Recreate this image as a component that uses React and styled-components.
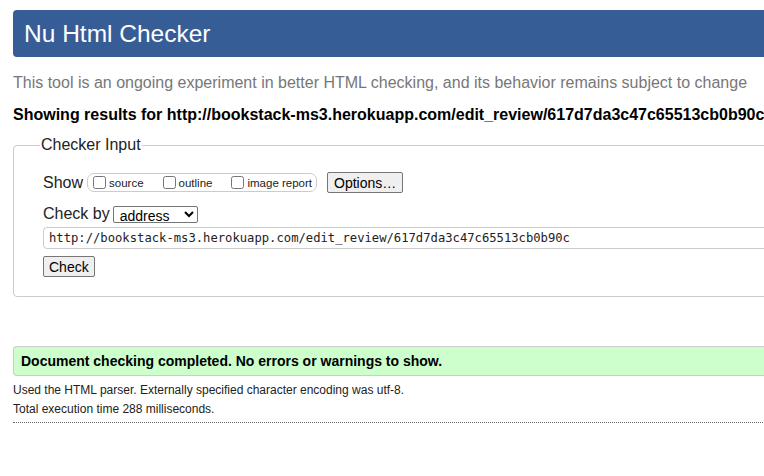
import React from 'react';
import styled, { createGlobalStyle } from 'styled-components';

const GlobalStyle = createGlobalStyle`
  html, body {
    margin: 0;
    padding: 0;
    background: #fff;
    overflow: hidden;
  }
  body {
    font-family: "Liberation Sans", Arial, sans-serif;
    color: #000;
  }
`;

const Page = styled.div`
  width: 1100px;
  padding: 10px 0 0 13px;
`;

const Header = styled.h1`
  margin: 0;
  height: 47px;
  background: #365d95;
  border-radius: 4px;
  color: #fff;
  font-weight: normal;
  font-size: 24.5px;
  line-height: 47px;
  padding-left: 11px;
`;

const Intro = styled.p`
  margin: 17px 0 0;
  color: #777;
  font-size: 16px;
  line-height: 18px;
`;

const Results = styled.p`
  margin: 14px 0 0;
  font-weight: bold;
  font-size: 16px;
  line-height: 18px;
`;

const Fieldset = styled.fieldset`
  margin: 12px 0 0;
  border: 1px solid #ccc;
  border-radius: 4px;
  padding: 8px 29px 19px;
  min-height: 0;
`;

const Legend = styled.legend`
  font-size: 16px;
  color: #222;
  padding: 0 1px;
  margin-left: -3px;
`;

const Row = styled.div`
  display: flex;
  align-items: center;
  margin-top: ${p => p.$top || 0}px;
  font-size: 16px;
`;

const Label = styled.span`
  font-size: 16px;
  color: #222;
`;

const ToggleGroup = styled.span`
  display: inline-flex;
  align-items: center;
  height: 17px;
  border: 1px solid #ccc;
  border-radius: 7px;
  padding: 0 4px 0 2px;
  margin-left: 4px;
  gap: 16px;
`;

const Toggle = styled.label`
  display: inline-flex;
  align-items: center;
  font-size: 11.5px;
  color: #222;

  input {
    margin: 0 3px 0 3px;
    width: 13px;
    height: 13px;
  }
`;

const Button = styled.button`
  font-family: "Liberation Sans", Arial, sans-serif;
  font-size: ${p => p.$size || 14}px;
  height: 21px;
  padding: 0 ${p => p.$pad || 6}px;
  background: #efefef;
  border: 1px solid #767676;
  border-radius: 2px;
  color: #000;
  margin-left: ${p => p.$left || 0}px;
`;

const Select = styled.select`
  font-family: "Liberation Sans", Arial, sans-serif;
  font-size: 14px;
  width: 85px;
  height: 17px;
  padding: 0 0 0 2px;
  border: 1px solid #767676;
  border-radius: 2px;
  margin-left: 3px;
  background: #fff;
`;

const UrlInput = styled.input`
  display: block;
  box-sizing: border-box;
  width: 1000px;
  height: 22px;
  margin-top: 4px;
  border: 1px solid #ccc;
  border-radius: 4px;
  padding: 0 5px;
  font-family: "DejaVu Sans Mono", "Liberation Mono", monospace;
  font-size: 12.2px;
  color: #222;
`;

const Success = styled.div`
  margin-top: 49px;
  height: 28px;
  background: #ccffcc;
  border: 1px solid #ccc;
  border-right: none;
  border-radius: 4px 0 0 4px;
  padding-left: 7px;
  font-weight: bold;
  font-size: 14px;
  line-height: 28px;
`;

const Detail = styled.p`
  margin: ${p => p.$top || 0}px 0 0;
  font-size: 12px;
  line-height: 19px;
  color: #222;
`;

const Divider = styled.hr`
  margin: 3px 0 0;
  border: none;
  border-top: 1px dotted #666;
  height: 0;
`;

export default function App() {
  const url = 'http://bookstack-ms3.herokuapp.com/edit_review/617d7da3c47c65513cb0b90c';
  return (
    <>
      <GlobalStyle />
      <Page>
        <Header>Nu Html Checker</Header>
        <Intro>This tool is an ongoing experiment in better HTML checking, and its behavior remains subject to change</Intro>
        <Results>Showing results for {url}</Results>
        <Fieldset>
          <Legend>Checker Input</Legend>
          <Row $top={10}>
            <Label>Show</Label>
            <ToggleGroup>
              <Toggle><input type="checkbox" />source</Toggle>
              <Toggle><input type="checkbox" />outline</Toggle>
              <Toggle><input type="checkbox" />image report</Toggle>
            </ToggleGroup>
            <Button $size={14} $left={10} $pad={6}>Options…</Button>
          </Row>
          <Row $top={12}>
            <Label>Check by</Label>
            <Select defaultValue="address">
              <option value="address">address</option>
              <option value="file">file upload</option>
              <option value="text">text input</option>
            </Select>
          </Row>
          <UrlInput defaultValue={url} />
          <Row $top={7}>
            <Button $size={14} $pad={5}>Check</Button>
          </Row>
        </Fieldset>
        <Success>Document checking completed. No errors or warnings to show.</Success>
        <Detail $top={5}>Used the HTML parser. Externally specified character encoding was utf-8.</Detail>
        <Detail>Total execution time 288 milliseconds.</Detail>
        <Divider />
      </Page>
    </>
  );
}
